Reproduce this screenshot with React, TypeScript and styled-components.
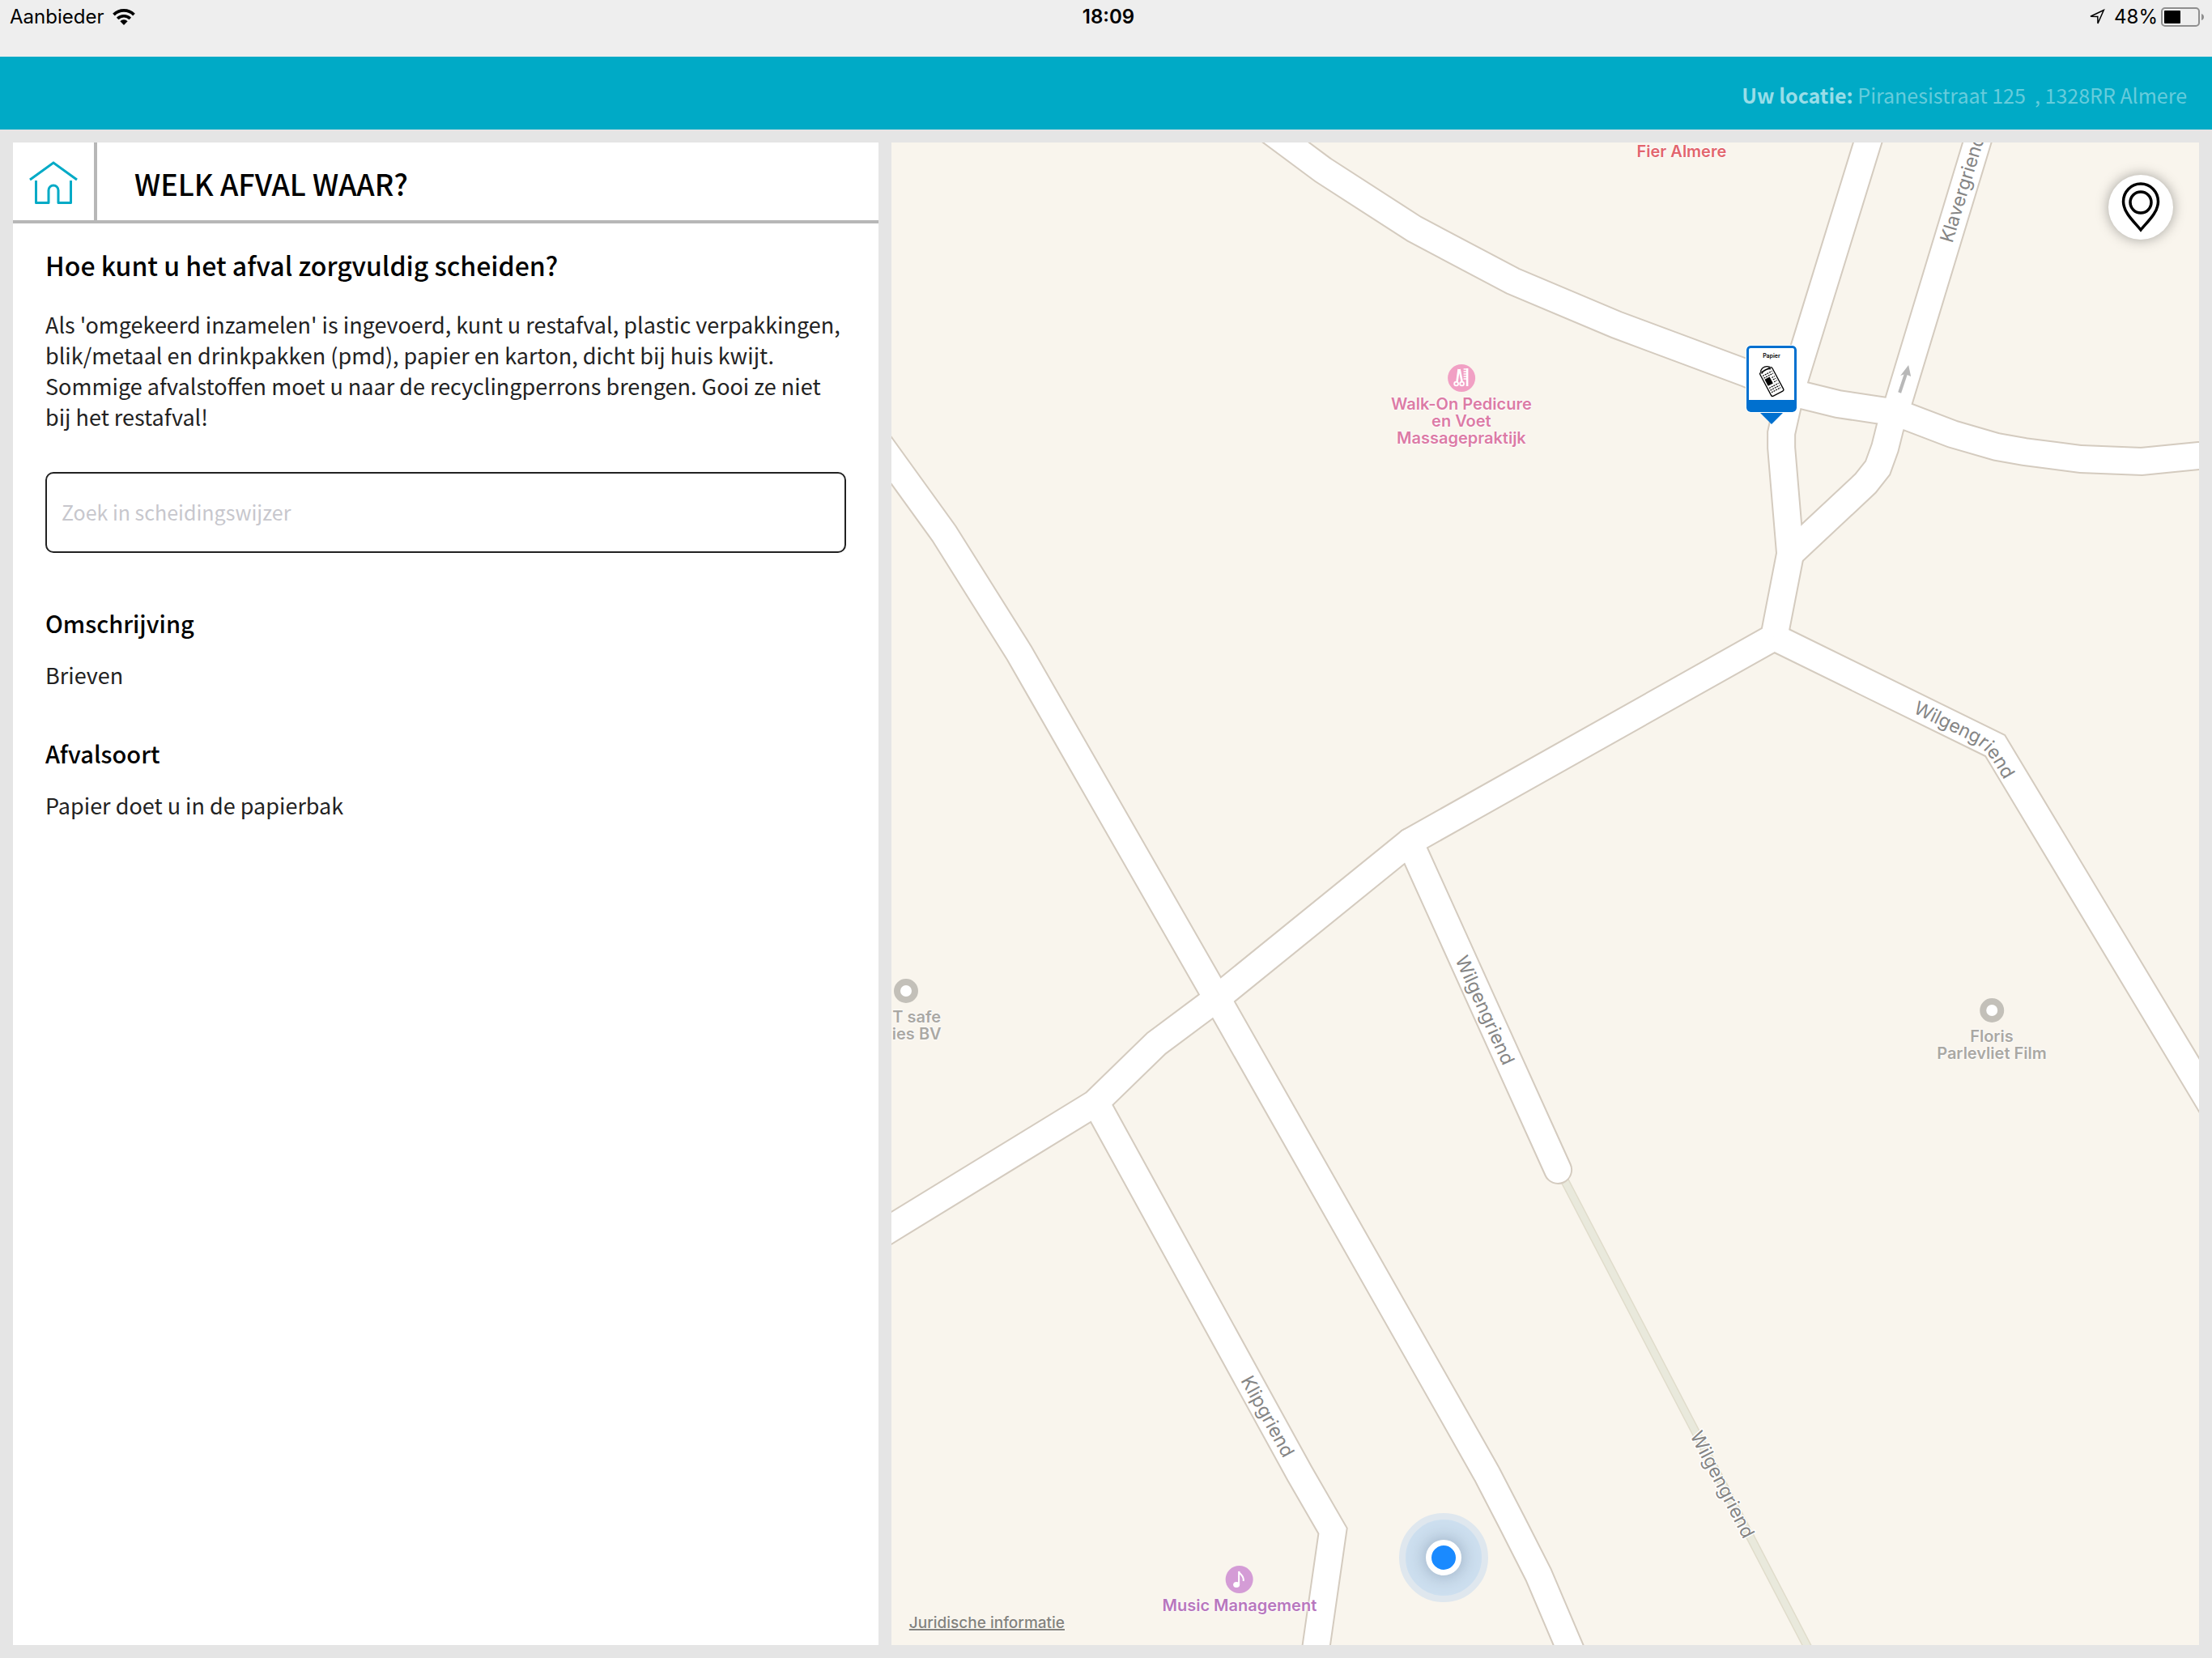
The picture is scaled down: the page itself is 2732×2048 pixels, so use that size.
import React from "react";
import styled, { createGlobalStyle } from "styled-components";

const GlobalStyle = createGlobalStyle`
  *, *::before, *::after { box-sizing: border-box; }
  html, body, #root { height: 100%; }
  body { margin: 0; background: #e5e5e5; }
`;

const appFont = '"Noto Sans CJK SC", "Noto Sans", sans-serif';
const systemFont = 'Inter, "Liberation Sans", sans-serif';

const Page = styled.div`
  display: flex;
  flex-direction: column;
  min-height: 100vh;
  font-family: ${appFont};
  color: #222;
`;

/* ---------- status bar ---------- */

const StatusBar = styled.header`
  display: grid;
  grid-template-columns: 1fr auto 1fr;
  align-items: start;
  height: 70px;
  padding: 6px 10px 0 12px;
  background: #eeeeee;
  font-family: ${systemFont};
  font-size: 24px;
  line-height: 30px;
  color: #000;
`;

const StatusGroup = styled.div<{ $end?: boolean; $gap: number }>`
  display: flex;
  align-items: center;
  justify-content: ${(p) => (p.$end ? "flex-end" : "flex-start")};
  gap: ${(p) => p.$gap}px;
  height: 30px;
`;

const Clock = styled.time`
  padding-left: 4px;
  font-weight: 600;
`;

/* ---------- location bar ---------- */

const LocationBar = styled.div`
  display: flex;
  align-items: center;
  justify-content: flex-end;
  height: 90px;
  padding: 4px 31px 0;
  background: #00aac6;
  color: #66ccdc;
  font-size: 25px;
  line-height: 36px;
  white-space: pre;
`;

const LocationLabel = styled.strong`
  font-weight: 700;
  color: #99dde8;
`;

/* ---------- layout ---------- */

const Columns = styled.main`
  flex: 1;
  display: grid;
  grid-template-columns: 2fr 3fr;
`;

const Column = styled.div<{ $side: "left" | "right" }>`
  display: flex;
  min-width: 0;
  padding: ${(p) => (p.$side === "left" ? "16px 8px 16px 16px" : "16px 16px 16px 8px")};
`;

const Panel = styled.section`
  flex: 1;
  min-width: 0;
  background: #fff;
`;

const PanelHeader = styled.div`
  display: flex;
  height: 100px;
  border-bottom: 4px solid #b7b7b7;
`;

const HomeButton = styled.button`
  display: flex;
  align-items: center;
  justify-content: center;
  width: 104px;
  padding: 3px 0 0;
  border: 0;
  border-right: 4px solid #b7b7b7;
  background: none;
`;

const PanelTitle = styled.h1`
  margin: 0;
  padding: 3px 0 0 46px;
  align-self: center;
  font-size: 36px;
  line-height: 48px;
  font-weight: 500;
  color: #000;
`;

const PanelBody = styled.div`
  padding: 31px 40px 40px;
`;

const Question = styled.h2`
  margin: 0 0 35px;
  font-size: 32px;
  line-height: 40px;
  font-weight: 500;
  color: #000;
`;

const Text = styled.p`
  margin: 0;
  font-size: 27px;
  line-height: 38px;
`;

const SearchInput = styled.input`
  display: block;
  width: 100%;
  height: 100px;
  margin: 49px 0 66px;
  padding: 0 18px 2px;
  border: 2px solid #222;
  border-radius: 10px;
  background: #fff;
  font-family: ${appFont};
  font-size: 25px;
  color: #222;
  &::placeholder {
    color: #c7c7cd;
    opacity: 1;
  }
`;

const Entry = styled.section`
  & + & {
    margin-top: 57px;
  }
`;

const EntryTitle = styled.h3`
  margin: 0 0 26px;
  font-size: 29px;
  line-height: 40px;
  font-weight: 500;
  color: #000;
`;

/* ---------- map ---------- */

const MAP = { x: 1101, y: 176, w: 1615, h: 1856 };
const place = (x: number, y: number): React.CSSProperties => ({
  left: `${((x - MAP.x) / MAP.w) * 100}%`,
  top: `${((y - MAP.y) / MAP.h) * 100}%`,
});

const MapView = styled.section`
  position: relative;
  flex: 1;
  min-width: 0;
  overflow: hidden;
  background: #f9f5ed;
  font-family: ${systemFont};
`;

const Roads = styled.svg`
  position: absolute;
  inset: 0;
  width: 100%;
  height: 100%;
`;

const StreetName = styled.text`
  font-family: ${systemFont};
  font-size: 23px;
  fill: #858585;
  stroke: #fff;
  stroke-width: 3px;
  stroke-linejoin: round;
  paint-order: stroke;
`;

const Poi = styled.div<{ $color: string; $start?: boolean }>`
  position: absolute;
  display: flex;
  flex-direction: column;
  align-items: ${(p) => (p.$start ? "flex-start" : "center")};
  gap: 5px;
  transform: translate(${(p) => (p.$start ? "0" : "-50%")}, -17px);
  color: ${(p) => p.$color};
  font-size: 20px;
  line-height: 21px;
  font-weight: 600;
  text-align: center;
  white-space: pre;
  text-shadow: 0 0 2px #fff, 0 0 2px #fff, 0 0 3px #fff;
`;

const Badge = styled.span<{ $color: string }>`
  display: flex;
  align-items: center;
  justify-content: center;
  width: 34px;
  height: 34px;
  border-radius: 50%;
  background: ${(p) => p.$color};
`;

const Ring = styled.span`
  width: 30px;
  height: 30px;
  margin: 2px;
  border: 8px solid #c3c0b9;
  border-radius: 50%;
  background: #fff;
`;

const UserDot = styled.div`
  position: absolute;
  display: grid;
  place-items: center;
  width: 110px;
  height: 110px;
  transform: translate(-50%, -50%);
  border: 8px solid #dfe7ee;
  border-radius: 50%;
  background: #cddfef;
  &::before {
    content: "";
    width: 44px;
    height: 44px;
    border: 7px solid #fff;
    border-radius: 50%;
    background: #1a8aff;
    box-shadow: 0 0 22px rgba(60, 80, 110, 0.4);
  }
`;

const Marker = styled.button`
  position: absolute;
  display: flex;
  flex-direction: column;
  align-items: center;
  padding: 0;
  border: 0;
  background: none;
  transform: translateX(-50%);
  font-family: ${systemFont};
`;

const MarkerCard = styled.span`
  display: flex;
  flex-direction: column;
  align-items: center;
  gap: 4px;
  width: 62px;
  height: 82px;
  padding-top: 5px;
  border: 3px solid #0070cf;
  border-bottom-width: 15px;
  border-radius: 5px;
  outline: 1px solid #fff;
  background: #fff;
  color: #000;
  font-size: 7px;
  line-height: 10px;
  font-weight: 600;
`;

const LocateButton = styled.button`
  position: absolute;
  top: 40px;
  right: 32px;
  display: grid;
  place-items: center;
  width: 80px;
  height: 80px;
  padding: 0;
  border: 0;
  border-radius: 50%;
  background: #fff;
  box-shadow: 0 0 16px rgba(0, 0, 0, 0.35);
`;

const LegalLink = styled.a`
  position: absolute;
  left: 22px;
  bottom: 15px;
  font-size: 19px;
  line-height: 24px;
  font-weight: 500;
  color: #83827d;
  text-decoration: underline;
  text-decoration-thickness: 2px;
  text-shadow: 0 0 2px #fff;
`;

/* ---------- drawings ---------- */

const WifiIcon = () => (
  <svg width="28" height="20" viewBox="0 0 28 20" aria-hidden="true">
    <path d="M14 20l-4.600-4.800a6.600 6.600 0 0 1 9.200 0z" fill="#000" />
    <path d="M6.200 12a11 11 0 0 1 15.600 0" fill="none" stroke="#000" strokeWidth="3.600" />
    <path d="M1.500 7.100a17.700 17.700 0 0 1 25 0" fill="none" stroke="#000" strokeWidth="3.800" />
  </svg>
);

const ArrowIcon = () => (
  <svg width="20" height="20" viewBox="0 0 20 20" aria-hidden="true">
    <path d="M18.300 1.500L2 9.200l8.800.300.200 8.500z" fill="none" stroke="#000" strokeWidth="1.500" />
  </svg>
);

const BatteryIcon = () => (
  <svg width="53" height="24" viewBox="0 0 53 24" aria-hidden="true">
    <rect x="1" y="1" width="46" height="22" rx="4" fill="none" stroke="#8f8f8f" strokeWidth="2" />
    <rect x="4" y="4" width="20" height="16" rx="1" fill="#000" />
    <path d="M50 8q3 1 3 4t-3 4z" fill="#8f8f8f" />
  </svg>
);

const HomeIcon = () => (
  <svg width="60" height="54" viewBox="0 0 60 54" fill="none" stroke="#00aac6" strokeWidth="3" aria-hidden="true">
    <path d="M1 23L30 2l29 21" />
    <path d="M8.500 24v27.500H24V36a6 6 0 0 1 12 0v15.500h15.500V24" strokeLinejoin="round" />
  </svg>
);

const PinIcon = () => (
  <svg width="48" height="62" viewBox="0 0 48 62" fill="none" stroke="#000" strokeWidth="3.500" aria-hidden="true">
    <path d="M24 59C17 50 2.500 38 2.500 24a21.500 22 0 0 1 43 0C45.500 38 31 50 24 59z" />
    <circle cx="24" cy="25" r="13" />
  </svg>
);

const NewspaperIcon = () => (
  <svg width="32" height="42" viewBox="0 0 32 42" aria-hidden="true">
    <g transform="rotate(-28 16 21)" fill="none" stroke="#000">
      <rect x="7" y="6" width="17" height="33" rx="2" strokeWidth="1.300" />
      <path d="M9 5q6-6 13 0M9 8q6-4 13 0" strokeWidth="1.200" />
      <path d="M9 11h13M9 14h13M18 18h4M18 21h4M18 24h4M9 28h13M9 31h13M9 34h13" strokeWidth="1.200" strokeDasharray="2 1" />
      <rect x="9" y="16" width="7" height="9" fill="#000" stroke="none" />
    </g>
  </svg>
);

const SalonIcon = () => (
  <svg width="22" height="26" viewBox="0 0 22 26" fill="none" stroke="#fff" aria-hidden="true">
    <path d="M7.500 2L5.500 17M8.500 2l3 15" strokeWidth="2.600" />
    <circle cx="4.500" cy="20" r="2.400" strokeWidth="1.800" />
    <circle cx="11.500" cy="20" r="2.400" strokeWidth="1.800" />
    <path d="M18 1v22" strokeWidth="2.600" />
    <path d="M13.500 2H18M13.500 5H18M13.500 8H18M13.500 11H18M13.500 14H18" strokeWidth="1.600" />
  </svg>
);

const NoteIcon = () => (
  <svg width="16" height="22" viewBox="0 0 16 22" aria-hidden="true">
    <ellipse cx="4.500" cy="17.500" rx="4" ry="3.400" fill="#fff" />
    <path d="M7.500 17.500V1c1 4.500 7 5 5.500 12" fill="none" stroke="#fff" strokeWidth="2" />
  </svg>
);

const roads = [
  "M1560 155L1634 210L1747 283L1868 347L1996 401L2157 461L2217 486L2270 499L2343 510L2411 536L2466 552L2500 558L2570 567L2645 570L2716 563L2760 559",
  "M2313 155L2211 486L2200 535L2200 553L2211 684L2191 787",
  "M2448 155L2342 505L2334 529L2328 553L2319 578L2304 597L2211 684",
  "M2191 787L2464 921L2744 1387",
  "M2191 787L1741 1040L1503 1233L1428 1289L1352 1363L1060 1542",
  "M1070 526L1166 659L1259 807L1503 1233L1836 1820L1867 1880L1900 1945L1937 2032L1954 2072",
  "M1354 1363L1605 1820L1646 1891L1620 2072",
];
const deadEnd = "M1741 1040L1924 1445";

const RoadMap = () => (
  <Roads viewBox={`${MAP.x} ${MAP.y} ${MAP.w} ${MAP.h}`} preserveAspectRatio="none" role="img" aria-label="Kaart">
    <path d="M1926 1446L2252 2072" fill="none" stroke="#e0dccb" strokeWidth="11" />
    <path d="M1926 1446L2252 2072" fill="none" stroke="#e9e9dc" strokeWidth="8" />
    <g fill="none" stroke="#d4cbbf" strokeWidth="36">
      {roads.map((d) => (
        <path key={d} d={d} />
      ))}
      <path d={deadEnd} strokeLinecap="round" />
    </g>
    <g fill="none" stroke="#fff" strokeWidth="32">
      {roads.map((d) => (
        <path key={d} d={d} />
      ))}
      <path d={deadEnd} strokeLinecap="round" />
    </g>
    <path d="M2346 485L2354 461" stroke="#b8b8b8" strokeWidth="4" />
    <path d="M2357 451L2347 464L2353 462L2360 465Z" fill="#b8b8b8" />
    <path id="klaver" d="M2411 301L2471 105" fill="none" />
    <path id="wilgen-a" d="M2362 880L2436 916Q2452 925 2463 943L2498 1001" fill="none" />
    <path id="wilgen-b" d="M1797 1185L1877 1363" fill="none" />
    <path id="wilgen-c" d="M2087 1773L2187 1967" fill="none" />
    <path id="klip" d="M1532 1705L1622 1869" fill="none" />
    <StreetName><textPath href="#klaver">Klavergriend</textPath></StreetName>
    <StreetName><textPath href="#wilgen-a">Wilgengriend</textPath></StreetName>
    <StreetName><textPath href="#wilgen-b">Wilgengriend</textPath></StreetName>
    <StreetName><textPath href="#wilgen-c">Wilgengriend</textPath></StreetName>
    <StreetName><textPath href="#klip">Klipgriend</textPath></StreetName>
  </Roads>
);

export default function App() {
  return (
    <Page>
      <GlobalStyle />
      <StatusBar>
        <StatusGroup $gap={11}>
          <span>Aanbieder</span>
          <WifiIcon />
        </StatusGroup>
        <Clock>18:09</Clock>
        <StatusGroup $end $gap={4}>
          <ArrowIcon />
          <span>&nbsp;48%</span>
          <BatteryIcon />
        </StatusGroup>
      </StatusBar>

      <LocationBar>
        <LocationLabel>Uw locatie: </LocationLabel>
        <span>{"Piranesistraat 125  , 1328RR Almere"}</span>
      </LocationBar>

      <Columns>
        <Column $side="left">
          <Panel>
            <PanelHeader>
              <HomeButton aria-label="Home">
                <HomeIcon />
              </HomeButton>
              <PanelTitle>WELK AFVAL WAAR?</PanelTitle>
            </PanelHeader>
            <PanelBody>
              <Question>Hoe kunt u het afval zorgvuldig scheiden?</Question>
              <Text>
                Als 'omgekeerd inzamelen' is ingevoerd, kunt u restafval, plastic verpakkingen,
                blik/metaal en drinkpakken (pmd), papier en karton, dicht bij huis kwijt. Sommige
                afvalstoffen moet u naar de recyclingperrons brengen. Gooi ze niet bij het
                restafval!
              </Text>
              <SearchInput
                type="text"
                aria-label="Zoek in scheidingswijzer"
                placeholder="Zoek in scheidingswijzer"
              />
              <Entry>
                <EntryTitle>Omschrijving</EntryTitle>
                <Text>Brieven</Text>
              </Entry>
              <Entry>
                <EntryTitle>Afvalsoort</EntryTitle>
                <Text>Papier doet u in de papierbak</Text>
              </Entry>
            </PanelBody>
          </Panel>
        </Column>

        <Column $side="right">
          <MapView aria-label="Kaart">
            <RoadMap />
            <Poi $color="#e2656d" style={place(2077, 155)}>
              <Badge $color="#e2656d" />
              Fier Almere
            </Poi>
            <Poi $color="#dc7ba5" style={place(1805, 467)}>
              <Badge $color="#f1a0c4">
                <SalonIcon />
              </Badge>
              {"Walk-On Pedicure\nen Voet\nMassagepraktijk"}
            </Poi>
            <Poi $start $color="#aaa8a3" style={place(1102, 1224)}>
              <Ring />
              {"T safe\nies BV"}
            </Poi>
            <Poi $color="#aaa8a3" style={place(2460, 1248)}>
              <Ring />
              {"Floris\nParlevliet Film"}
            </Poi>
            <Poi $color="#b877bd" style={place(1531, 1951)}>
              <Badge $color="#d49cd6">
                <NoteIcon />
              </Badge>
              Music Management
            </Poi>
            <UserDot style={place(1783, 1924)} />
            <Marker aria-label="Papier" style={place(2188, 427)}>
              <MarkerCard>
                Papier
                <NewspaperIcon />
              </MarkerCard>
              <svg width="30" height="15" viewBox="0 0 30 15" aria-hidden="true">
                <path d="M1 1h28L15 15z" fill="#0070cf" />
              </svg>
            </Marker>
            <LocateButton aria-label="Toon locaties">
              <PinIcon />
            </LocateButton>
            <LegalLink href="#">Juridische informatie</LegalLink>
          </MapView>
        </Column>
      </Columns>
    </Page>
  );
}
